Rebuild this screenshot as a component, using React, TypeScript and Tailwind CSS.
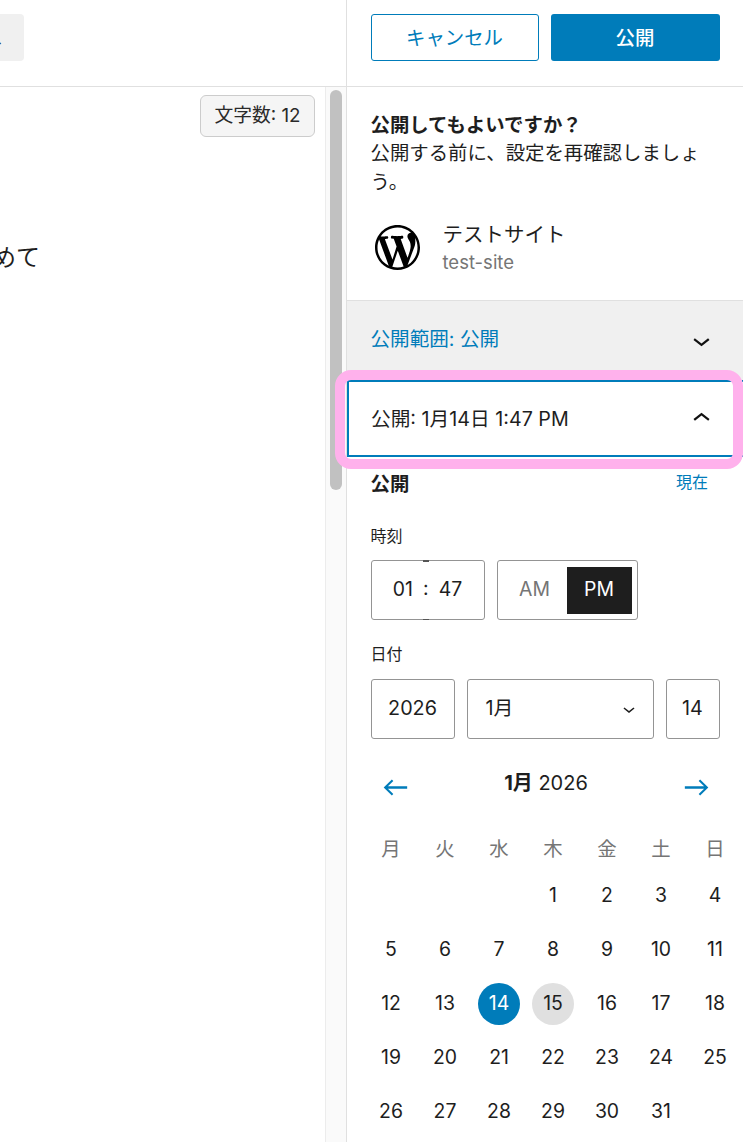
const weekdays = ["月", "火", "水", "木", "金", "土", "日"];
const leadingBlanks = 3;
const days = Array.from({ length: 31 }, (_, i) => i + 1);

function ChevronDown({ className }: { className?: string }) {
  return (
    <svg viewBox="0 0 24 24" className={className} fill="currentColor">
      <path d="M17.5 11.6L12 16l-5.5-4.4.9-1.2L12 14l4.5-3.6 1 1.2z" />
    </svg>
  );
}

function ChevronUp({ className }: { className?: string }) {
  return (
    <svg viewBox="0 0 24 24" className={className} fill="currentColor">
      <path d="M6.5 12.4L12 8l5.5 4.4-.9 1.2L12 10l-4.5 3.6-1-1.2z" />
    </svg>
  );
}

function WpLogo() {
  return (
    <svg viewBox="0 0 20 20" className="w-[45px] h-[45px] text-black" fill="currentColor">
      <path d="M20 10c0-5.51-4.49-10-10-10C4.48 0 0 4.49 0 10c0 5.52 4.48 10 10 10 5.51 0 10-4.48 10-10zM7.78 15.37L4.37 6.22c.55-.02 1.17-.08 1.17-.08.5-.06.44-1.13-.06-1.11 0 0-1.45.11-2.37.11-.18 0-.37 0-.58-.01C4.12 2.69 6.87 1.11 10 1.11c2.33 0 4.45.87 6.05 2.34-.68-.11-1.65.39-1.65 1.58 0 .74.45 1.36.9 2.1.35.61.55 1.36.55 2.46 0 1.49-1.4 5-1.4 5l-3.03-8.37c.54-.02.82-.17.82-.17.5-.05.44-1.25-.06-1.22 0 0-1.44.12-2.38.12-.87 0-2.33-.12-2.33-.12-.5-.03-.56 1.2-.06 1.22l.92.08 1.26 3.41zM17.41 10c.24-.64.74-1.87.43-4.25.7 1.29 1.05 2.71 1.05 4.25 0 3.29-1.73 6.24-4.4 7.78.97-2.59 1.94-5.2 2.92-7.78zM6.1 18.09C3.12 16.65 1.11 13.53 1.11 10c0-1.3.23-2.48.72-3.59C3.25 10.3 4.67 14.2 6.1 18.09zm4.03-6.63l2.58 6.98c-.86.29-1.76.45-2.71.45-.79 0-1.57-.11-2.29-.33.81-2.38 1.62-4.74 2.42-7.1z" />
    </svg>
  );
}

function DayCell({ day }: { day: number }) {
  let circle = "text-[#1e1e1e]";
  if (day === 14) circle = "bg-[#007cba] text-white";
  if (day === 15) circle = "bg-[#e0e0e0] text-[#1e1e1e]";
  return (
    <div className="h-[54px] flex items-center justify-center">
      <div className={`w-[42px] h-[42px] rounded-full flex items-center justify-center text-[19.4px] ${circle}`}>
        {day}
      </div>
    </div>
  );
}

export default function App() {
  return (
    <div className="w-[743px] h-[1142px] overflow-hidden flex bg-white text-[#1e1e1e] font-['Inter','Noto_Sans_CJK_JP',sans-serif]">
      <div className="w-[346px] shrink-0 flex flex-col">
        <div className="h-[87px] shrink-0 border-b-[1.5px] border-[#e0e0e0] flex items-start pt-[14px]">
          <div className="w-[124px] -ml-[100px] h-[47px] rounded-[4px] bg-[#f0f0f0] flex items-center justify-end pr-[21px] text-[19.4px] leading-none">
            ス
          </div>
        </div>
        <div className="flex-1 flex min-h-0">
          <div className="w-[325px] shrink-0 flex flex-col items-end overflow-hidden">
            <div className="mt-[8px] mr-[10px] h-[42px] w-[115px] rounded-[6px] border-[1.5px] border-[#cccccc] bg-[#f5f5f5] flex items-center justify-center text-[18.8px] text-[#2a2a2a]">
              文字数: 12
            </div>
            <div className="mt-[103px] mr-[285px] whitespace-nowrap text-[24px] leading-[36px]">はじめて</div>
          </div>
          <div className="w-[21px] shrink-0 border-l-[1.5px] border-[#ececec] bg-[#fafafa] pt-[3px] pl-[4px]">
            <div className="w-[12px] h-[400px] rounded-full bg-[#c1c1c1]" />
          </div>
        </div>
      </div>

      <div className="flex-1 min-w-0 border-l-[1.5px] border-[#e0e0e0] flex flex-col">
        <div className="h-[87px] shrink-0 border-b-[1.5px] border-[#e0e0e0] flex items-start pt-[14px] pl-[23.5px] gap-[12px]">
          <div className="w-[168px] h-[47px] pt-[3px] rounded-[3px] border-[1.5px] border-[#007cba] flex items-center justify-center text-[19.4px] text-[#007cba]">
            キャンセル
          </div>
          <div className="w-[169px] h-[47px] pt-[3px] rounded-[3px] bg-[#007cba] flex items-center justify-center text-[19.4px] font-medium text-white">
            公開
          </div>
        </div>

        <div className="h-[213px] shrink-0 pl-[23.5px] pt-[24px] pr-[36px]">
          <div className="text-[19.4px] leading-[29px] font-bold">公開してもよいですか？</div>
          <div className="text-[19.4px] leading-[29px] -mt-[1px]">公開する前に、設定を再確認しましょう。</div>
          <div className="mt-[23px] flex items-center">
            <div className="ml-[4px]">
              <WpLogo />
            </div>
            <div className="ml-[23px]">
              <div className="text-[20.5px] leading-[29px]">テストサイト</div>
              <div className="text-[18.5px] leading-[25px] mt-[1px] text-[#757575]">test-site</div>
            </div>
          </div>
        </div>

        <div className="h-[80px] shrink-0 border-t-[1.5px] border-[#e0e0e0] bg-[#f0f0f0] pl-[23.5px] pr-[24px] flex items-center justify-between text-[19.6px]">
          <span className="text-[#007cba] -mt-[1px]">公開範囲: 公開</span>
          <ChevronDown className="w-[35px] h-[35px] text-[#111111]" />
        </div>

        <div className="relative h-[77px] shrink-0 border-y-2 border-l-2 border-[#007cba] pl-[22px] pr-[24px] flex items-center justify-between text-[19.7px]">
          <span className="mt-[2px]">公開: 1月14日 1:47 PM</span>
          <ChevronUp className="w-[35px] h-[35px] text-[#111111]" />
          <div className="absolute -left-[14px] -top-[12px] w-[408px] h-[99px] rounded-[16px] border-[10px] border-[#ffb1ec] pointer-events-none" />
        </div>

        <div className="pl-[23.5px] pr-[35px] pt-[5px] flex items-center justify-between h-[50px]">
          <span className="text-[19.4px] font-bold">公開</span>
          <span className="text-[16px] text-[#007cba] -mt-[6px]">現在</span>
        </div>

        <div className="pl-[23.5px] pt-[17px]">
          <div className="text-[16px] leading-[24px]">時刻</div>
          <div className="mt-[12px] flex gap-[12.5px]">
            <div className="w-[114px] h-[60px] rounded-[3px] border-[1.5px] border-[#949494] flex items-center justify-center text-[19.4px]">
              <span>01</span>
              <span className="h-[60px] w-[26px] -my-[1.5px] flex items-center justify-center relative">
                <span className="-mt-[3px]">:</span>
                <span className="absolute top-0 left-[10px] w-[6px] h-[1.5px] bg-[#555555]" />
                <span className="absolute bottom-0 left-[10px] w-[6px] h-[1.5px] bg-[#555555]" />
              </span>
              <span>47</span>
            </div>
            <div className="w-[141px] h-[60px] rounded-[3px] border-[1.5px] border-[#949494] flex items-center pl-[4.5px] text-[19.4px]">
              <span className="w-[64px] text-center text-[#757575]">AM</span>
              <span className="w-[65px] h-[47px] bg-[#1e1e1e] text-white flex items-center justify-center">PM</span>
            </div>
          </div>

          <div className="mt-[22px] text-[16px] leading-[24px]">日付</div>
          <div className="mt-[13px] flex gap-[12px] text-[19.8px]">
            <div className="w-[84px] h-[60px] rounded-[3px] border-[1.5px] border-[#949494] flex items-center justify-center">2026</div>
            <div className="w-[187px] h-[60px] rounded-[3px] border-[1.5px] border-[#949494] flex items-center justify-between pl-[18px] pr-[12px]">
              <span>1月</span>
              <ChevronDown className="w-[24px] h-[24px]" />
            </div>
            <div className="w-[54px] h-[60px] rounded-[3px] border-[1.5px] border-[#949494] flex items-center justify-center">14</div>
          </div>
        </div>

        <div className="mt-[20px] ml-[17px] w-[378px]">
          <div className="w-[364px] flex items-start justify-between px-[13.5px] h-[72px]">
            <svg viewBox="0 0 24 24" className="w-[35px] h-[35px] mt-[11px] text-[#007cba]" fill="currentColor">
              <path d="M20 11.2H6.8l3.7-3.7-1-1L3.9 12l5.6 5.5 1-1-3.7-3.7H20z" />
            </svg>
            <div className="text-[20px] leading-[28px] mt-[10px]">
              <span className="font-bold">1月</span> 2026
            </div>
            <svg viewBox="0 0 24 24" className="w-[35px] h-[35px] mt-[11px] text-[#007cba]" fill="currentColor">
              <path d="m14.5 6.5-1 1 3.7 3.7H4v1.6h13.2l-3.7 3.7 1 1 5.6-5.5z" />
            </svg>
          </div>
          <div className="grid grid-cols-[repeat(7,54px)]">
            {weekdays.map((w) => (
              <div key={w} className="h-[38px] flex items-center justify-center text-[19.4px] text-[#757575]">
                {w}
              </div>
            ))}
            {Array.from({ length: leadingBlanks }, (_, i) => (
              <div key={`blank-${i}`} />
            ))}
            {days.map((d) => (
              <DayCell key={d} day={d} />
            ))}
          </div>
        </div>
      </div>
    </div>
  );
}
